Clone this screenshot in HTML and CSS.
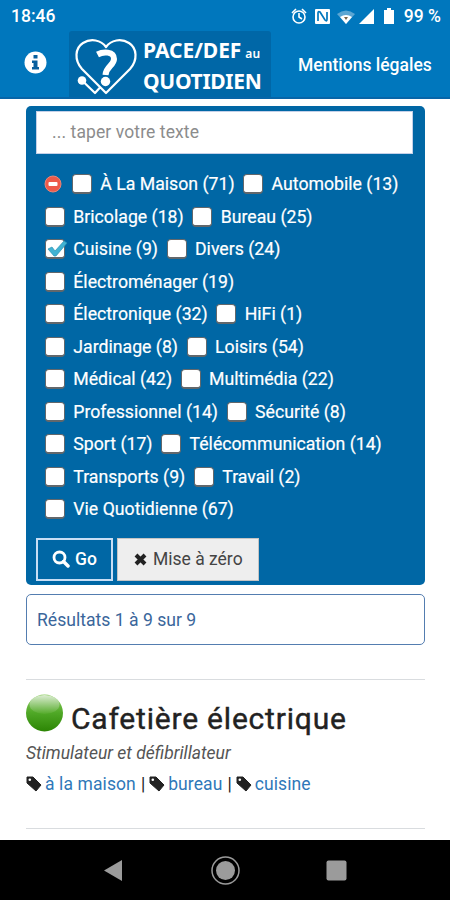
FILE: index.html
```
<!DOCTYPE html>
<html lang="fr">
<head>
<meta charset="utf-8">
<title>PACE/DEF au quotidien</title>
<link rel="stylesheet" href="styles.css">
</head>
<body>
<header class="top">
  <div class="status">
    <span class="time">18:46</span>
    <svg class="status-icons" width="110" height="20" viewBox="0 0 110 20">
      <g fill="none" stroke="#fff" stroke-width="1.6"><circle cx="9" cy="11" r="6"/><path d="M9 7v4l3 2M2 7l4-4M16 7l-4-4"/></g>
      <rect x="25" y="3" width="15" height="15" rx="1" fill="#fff"/>
      <path d="M28 15V7q0-2 2-1l5 8q2 2 2-1V6" fill="none" stroke="#0077bd" stroke-width="1.7"/>
      <path d="M47 8q9-7 18 0l-9 10z" fill="#5ba6d3"/><path d="M50 11q6-4 12 0l-6 7z" fill="#fff"/>
      <path d="M54 11h4l-2 3z" fill="#78654a"/>
      <path d="M84 3v15H69z" fill="#fff"/>
      <path d="M97 2h4v2h3v14H94V4h3z" fill="#fff"/>
    </svg>
    <span class="battery">99 %</span>
  </div>
  <nav class="nav">
    <svg class="info" width="23" height="23" viewBox="0 0 23 23"><circle cx="11.500" cy="11.500" r="11" fill="#fff"/><path d="M9.500 4h4v3.500h-4zM8 9.500h5.500V16H15v2.500H8V16h1.500v-4H8z" fill="#075f9e"/></svg>
    <div class="logo">
      <svg width="74" height="66" viewBox="0 0 74 66">
        <path d="M13.500 50L26 62L31 56.500M37 62L13 38C5 29 6 17 14 12C22 7 32 9 37 16C42 9 52 7 60 12C68 17 69 29 61 38L37 62Z" fill="none" stroke="#fff" stroke-width="2.200" stroke-linejoin="round"/>
        <circle cx="13" cy="49.500" r="4.300" fill="#fff"/>
        <path d="M28.500 23.500C34 20.500 45 20 45 28C45 34.500 37 35.500 36.500 44" fill="none" stroke="#fff" stroke-width="6"/>
        <circle cx="36.500" cy="50.500" r="4.700" fill="#fff"/>
      </svg>
      <div class="logo-text"><div class="wide">PACE/DEF<small>au</small></div><div>QUOTIDIEN</div></div>
    </div>
    <a class="legal">Mentions légales</a>
  </nav>
</header>
<main>
  <form class="panel">
    <div class="search">... taper votre texte</div>
    <div class="rows">
      <div class="row"><svg class="minus" width="18" height="18" viewBox="0 0 18 18"><circle cx="9" cy="9" r="8" fill="#ed5a4a" stroke="#e98578"/><rect x="4.500" y="7" width="9" height="4" rx="1" fill="#fff"/></svg><i class="box"></i><span>À La Maison (71)</span><i class="box"></i><span>Automobile (13)</span></div>
      <div class="row"><i class="box"></i><span>Bricolage (18)</span><i class="box"></i><span>Bureau (25)</span></div>
      <div class="row"><i class="box"><svg class="tick" width="22" height="18" viewBox="0 0 22 18"><path d="M2 9l4-2 3 4L18 1l3 2L10 16H8z" fill="#41b3d3" stroke="#2d94b5" stroke-width=".7"/></svg></i><span>Cuisine (9)</span><i class="box"></i><span>Divers (24)</span></div>
      <div class="row"><i class="box"></i><span>Électroménager (19)</span></div>
      <div class="row"><i class="box"></i><span>Électronique (32)</span><i class="box"></i><span>HiFi (1)</span></div>
      <div class="row"><i class="box"></i><span>Jardinage (8)</span><i class="box"></i><span>Loisirs (54)</span></div>
      <div class="row"><i class="box"></i><span>Médical (42)</span><i class="box"></i><span>Multimédia (22)</span></div>
      <div class="row"><i class="box"></i><span>Professionnel (14)</span><i class="box"></i><span>Sécurité (8)</span></div>
      <div class="row"><i class="box"></i><span>Sport (17)</span><i class="box"></i><span>Télécommunication (14)</span></div>
      <div class="row"><i class="box"></i><span>Transports (9)</span><i class="box"></i><span>Travail (2)</span></div>
      <div class="row"><i class="box"></i><span>Vie Quotidienne (67)</span></div>
    </div>
    <div class="buttons">
      <div class="btn go"><svg width="18" height="18" viewBox="0 0 18 18" fill="none" stroke="#fff"><circle cx="7.500" cy="7.500" r="5.500" stroke-width="2.800"/><path d="M11.500 11.500L16 16" stroke-width="3.500" stroke-linecap="round"/></svg><span>Go</span></div>
      <div class="btn reset"><svg width="13" height="13" viewBox="0 0 13 13"><path d="M2 2l9 9M11 2l-9 9" stroke="#222" stroke-width="4"/></svg><span>Mise à zéro</span></div>
    </div>
  </form>
  <div class="results">Résultats 1 à 9 sur 9</div>
  <article class="item">
    <h2><svg width="38" height="38" viewBox="0 0 38 38">
      <defs><linearGradient id="g" x1="0" y1="0" x2="0" y2="1"><stop offset="0" stop-color="#8fcf62"/><stop offset=".5" stop-color="#4fa826"/><stop offset="1" stop-color="#2c8504"/></linearGradient><linearGradient id="h" x1="0" y1="0" x2="0" y2="1"><stop offset="0" stop-color="#dcedd2"/><stop offset="1" stop-color="#55ab2b"/></linearGradient></defs>
      <circle cx="18.500" cy="19" r="18.500" fill="url(#g)"/><ellipse cx="18.500" cy="10.500" rx="15" ry="9.500" fill="url(#h)"/></svg><span>Cafetière électrique</span></h2>
    <p class="device">Stimulateur et défibrillateur</p>
    <p class="tags"><svg class="tag" width="16" height="16" viewBox="0 0 16 16"><path d="M1 1h6l8 8-5 6L1 7z" fill="#222" stroke="#222" stroke-linejoin="round"/><circle cx="3.800" cy="3.800" r="1.300" fill="#fff"/></svg><a>à la maison</a><b>|</b><svg class="tag" width="16" height="16" viewBox="0 0 16 16"><path d="M1 1h6l8 8-5 6L1 7z" fill="#222" stroke="#222" stroke-linejoin="round"/><circle cx="3.800" cy="3.800" r="1.300" fill="#fff"/></svg><a>bureau</a><b>|</b><svg class="tag" width="16" height="16" viewBox="0 0 16 16"><path d="M1 1h6l8 8-5 6L1 7z" fill="#222" stroke="#222" stroke-linejoin="round"/><circle cx="3.800" cy="3.800" r="1.300" fill="#fff"/></svg><a>cuisine</a></p>
  </article>
</main>
<footer class="system">
  <svg width="450" height="60" viewBox="0 0 450 60"><g fill="#9b9b9b"><path d="M104 30.500L122 20v21z"/><circle cx="225.500" cy="30.500" r="9.500"/><circle cx="225.500" cy="30.500" r="13.500" fill="none" stroke="#9b9b9b" stroke-width="1.500"/><rect x="326.500" y="20.500" width="20" height="20" rx="2"/></g></svg>
</footer>
</body>
</html>
```
FILE: styles.css
```
* { box-sizing: border-box; }
body { margin: 0; width: 450px; height: 900px; overflow: hidden; display: flex; flex-direction: column; background: #fff; font-family: Roboto, sans-serif; font-size: 18px; color: #222; }
svg { display: block; flex: none; }
.top { height: 99px; flex: none; background: #0077bd; border-bottom: 2px solid #0765a8; color: #fff; }
.status { height: 31px; display: flex; align-items: center; padding: 1px 9px 0 11px; font-weight: 500; font-size: 17.500px; }
.status-icons { margin-left: auto; margin-right: 4px; }
.nav { height: 66px; display: flex; align-items: flex-start; }
.info { margin: 20px 0 0 24px; }
.logo { width: 202px; height: 66px; margin-left: 22px; background: #0067a7; display: flex; border-radius: 3px 3px 0 0; }
.logo-text { font-family: "Noto Sans", sans-serif; font-weight: 700; font-size: 21px; line-height: 31px; letter-spacing: -.3px; padding-top: 4px; white-space: nowrap; }
.logo-text div { height: 31px; }
.logo-text .wide { letter-spacing: -.05px; }
.logo-text small { font-size: 12px; line-height: 0; margin-left: 4px; font-weight: 600; letter-spacing: .2px; }
.legal { margin: 23px 0 0 27px; line-height: 22px; white-space: nowrap; font-size: 17.500px; font-weight: 500; }
main { flex: 1; padding: 7px 25px 0 26px; min-height: 0; }
.panel { height: 479px; border-radius: 5px; background: #0067a5; padding: 5px 10px; color: #fff; }
.search { width: 377px; height: 43px; border: 1px solid #c4d0e8; background: #fff; color: #8c8c8c; padding: 0 15px; line-height: 40px; font-size: 17.500px; letter-spacing: .1px; }
.rows { padding: 14px 0 0 9px; font-size: 17.700px; }
.row { height: 32.500px; display: flex; align-items: center; white-space: nowrap; }
.row span { margin: 0 8.700px 0 8.300px; -webkit-text-stroke: .2px #fff; }
.minus { margin: 0 10px 0 -1px; }
.box { width: 20px; height: 20px; flex: none; background: #fff; border: 1px solid #62676b; border-bottom-width: 2px; border-radius: 4px; position: relative; }
.tick { position: absolute; left: 0; top: 0; }
.buttons { display: flex; gap: 4px; padding-top: 12px; }
.btn { height: 43px; display: flex; align-items: center; }
.go { width: 77px; border: 2px solid #c8def5; padding-left: 14px; gap: 5px; font-weight: 500; font-size: 17.500px; }
.reset { width: 142px; border: 1px solid #c4c4c4; background: #eee; color: #444; padding-left: 16px; gap: 6px; font-size: 17.500px; }
.results { height: 51px; margin-top: 9px; border: 1px solid #547db0; border-radius: 5px; padding-left: 10px; line-height: 50px; color: #3a669b; font-size: 17.600px; }
.item { margin-top: 34px; height: 150px; border-top: 1px solid #d9dcdf; border-bottom: 1px solid #d9dcdf; }
h2 { margin: 0; padding-top: 14px; height: 59px; display: flex; gap: 7px; font-size: 30px; font-weight: 400; letter-spacing: .8px; -webkit-text-stroke: .4px #222; line-height: 49px; white-space: nowrap; }
p { margin: 0; white-space: nowrap; }
.device { font-style: italic; color: #555; line-height: 28px; font-size: 17.500px; }
.tags { height: 34px; display: flex; align-items: center; font-size: 17.500px; }
.tags a { color: #2f78b9; margin-left: 3px; letter-spacing: .1px; }
.tags b { font-weight: 400; margin: 0 3px 0 5px; }
.tags b + .tag { margin-left: 1px; }
.system { height: 60px; flex: none; background: #000; }
```
